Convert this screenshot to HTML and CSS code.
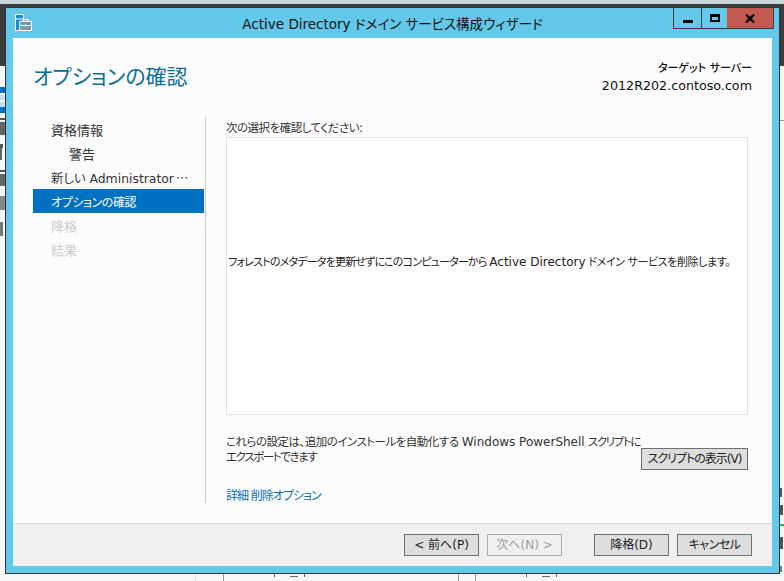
FILE: index.html
```html
<!DOCTYPE html>
<html lang="ja">
<head>
    <meta charset="UTF-8">
    <title>Active Directory ドメイン サービス構成ウィザード</title>
    <link rel="stylesheet" href="styles.css">
</head>
<body>
    <!-- Server Manager showing behind the dialog -->
    <svg class="desktop" width="784" height="581" viewBox="0 0 784 581">
        <rect width="784" height="581" fill="#f7f7f7"/>
        <rect width="784" height="4" fill="#c9d6da"/>
        <rect y="4" width="784" height="62" fill="#3d3d3d"/>
        <rect y="87" width="5" height="6" fill="#0070c0"/>
        <rect y="95" width="5" height="5" fill="#c4def2"/>
        <rect y="102" width="5" height="5" fill="#c4def2"/>
        <rect y="107" width="5" height="6" fill="#0070c0"/>
        <rect y="118" width="5" height="2" fill="#555"/>
        <rect y="122" width="5" height="13" fill="#666"/>
        <rect y="144" width="3" height="4" fill="#555"/>
        <rect y="148" width="2" height="12" fill="#666"/>
        <rect y="170" width="5" height="2" fill="#555"/>
        <rect y="174" width="5" height="12" fill="#666"/>
        <rect y="196" width="5" height="14" fill="#888"/>
        <rect y="222" width="3" height="14" fill="#777"/>
        <rect x="780" y="120" width="4" height="1" fill="#999"/>
        <rect x="780" y="488" width="2" height="9" fill="#555"/>
        <rect x="780" y="505" width="3" height="10" fill="#555"/>
        <rect x="780" y="524" width="4" height="2" fill="#2fb52f"/>
        <rect x="780" y="537" width="3" height="12" fill="#555"/>
        <rect x="780" y="566" width="2" height="6" fill="#777"/>
        <rect x="195" y="574" width="1" height="7" fill="#ddd"/>
        <rect x="223" y="574" width="1" height="7" fill="#999"/>
        <rect x="458" y="574" width="1" height="7" fill="#999"/>
        <rect x="475" y="574" width="1" height="7" fill="#999"/>
        <rect x="274" y="574" width="1" height="3" fill="#666"/>
        <rect x="290" y="576" width="8" height="1" fill="#666"/>
        <rect x="304" y="574" width="1" height="3" fill="#666"/>
        <rect x="526" y="574" width="1" height="3" fill="#666"/>
        <rect x="542" y="576" width="8" height="1" fill="#666"/>
        <rect x="556" y="574" width="1" height="3" fill="#666"/>
    </svg>

    <div class="window">
        <div class="titlebar">
            <svg class="app-icon" width="17" height="17" viewBox="0 0 17 17">
                <path d="M.5.500h8v16h-8z" fill="#1e8ad6" stroke="#fff"/>
                <path d="M1 5h7" stroke="#fff"/>
                <path d="M4.500 7.500h12v9h-12z" fill="#7b98ae" stroke="#fff"/>
                <path d="M8 7V5.500h5V7M5 11.500h11M10.500 10.500v2" fill="none" stroke="#fff"/>
            </svg>
            <div class="title">Active Directory ドメイン サービス構成ウィザード</div>
            <div class="win-buttons">
                <div class="win-btn btn-min"><span class="min-glyph"></span></div>
                <div class="win-btn btn-max"><span class="max-glyph"></span></div>
                <div class="win-btn btn-close">
                    <svg width="10" height="9" viewBox="0 0 10 9"><path d="M1 .500l8 8M9 .500l-8 8" stroke="#000" stroke-width="2.400"/></svg>
                </div>
            </div>
        </div>

        <div class="client">
            <div class="header">
                <h1>オプションの確認</h1>
                <div class="target">
                    <div class="target-label">ターゲット サーバー</div>
                    <div class="target-name">2012R202.contoso.com</div>
                </div>
            </div>

            <div class="main">
                <div class="steps">
                    <div class="step">資格情報</div>
                    <div class="step sub">警告</div>
                    <div class="step long">新しい Administrator<span class="ellipsis">…</span></div>
                    <div class="step active">オプションの確認</div>
                    <div class="step off">降格</div>
                    <div class="step off">結果</div>
                </div>

                <div class="content">
                    <div class="label">次の選択を確認してください:</div>
                    <div class="review"><span>フォレストのメタデータを更新せずにこのコンピューターから <span class="latin">Active Directory</span> <span class="review-tail">ドメイン サービスを削除します。</span></span></div>
                    <div class="export">
                        <div class="export-text">これらの設定は、追加のインストールを自動化する <span class="latin">Windows PowerShell</span> <span class="kana">スクリプトに</span><br><span class="kana">エクスポートできます</span></div>
                        <button class="btn btn-script">スクリプトの表示(V)</button>
                    </div>
                    <a class="more" href="#">詳細 削除オプション</a>
                </div>
            </div>

            <div class="footer">
                <button class="btn">&lt; 前へ(P)</button>
                <button class="btn disabled">次へ(N) &gt;</button>
                <button class="btn gap">降格(D)</button>
                <button class="btn btn-cancel">キャンセル</button>
            </div>
        </div>
    </div>
</body>
</html>
```

FILE: styles.css
```css
html, body {
    margin: 0;
    height: 100%;
}

body {
    overflow: hidden;
    font-family: "DejaVu Sans", "Noto Sans CJK JP", sans-serif;
    font-feature-settings: "palt";
    font-size: 12px;
    color: #222;
}

.desktop {
    position: absolute;
    left: 0;
    top: 0;
}

.window {
    position: absolute;
    left: 5px;
    top: 7px;
    width: 775px;
    height: 567px;
    box-sizing: border-box;
    border: 1px solid #333;
    background-color: #63c8ea;
    padding: 0 7px 7px 7px;
    display: flex;
    flex-direction: column;
}

.titlebar {
    height: 30px;
    flex-shrink: 0;
    position: relative;
    display: flex;
    align-items: center;
    justify-content: center;
}

.app-icon {
    position: absolute;
    left: 2px;
    top: 6px;
}

.title {
    font-size: 13.500px;
    color: #111;
    margin-bottom: 1px;
}

.win-buttons {
    position: absolute;
    right: -2px;
    top: 0;
    display: flex;
    height: 21px;
    box-sizing: border-box;
    border: 1px solid #3d3d3d;
    border-top: 0;
}

.win-btn {
    display: flex;
    align-items: center;
    justify-content: center;
    box-sizing: border-box;
}

.btn-min {
    width: 28px;
    border-right: 1px solid #3d3d3d;
}

.btn-max {
    width: 25px;
}

.btn-close {
    width: 46px;
    background-color: #c35a50;
}

.min-glyph {
    width: 10px;
    height: 3px;
    margin-top: 7px;
    background-color: #000;
}

.max-glyph {
    width: 6px;
    height: 3px;
    border: 2px solid #000;
    border-top-width: 3px;
}

.client {
    flex: 1;
    display: flex;
    flex-direction: column;
    background-color: #fcfcfc;
    min-height: 0;
}

.header {
    height: 79px;
    flex-shrink: 0;
    display: flex;
    justify-content: space-between;
    padding: 0 20px 0 20px;
    box-sizing: border-box;
}

h1 {
    margin: 24px 0 0 0;
    font-size: 21px;
    font-weight: normal;
    line-height: 30px;
    color: #0a6f96;
}

.target {
    margin-top: 22px;
    text-align: right;
    line-height: 17px;
    color: #111;
}

.target-label {
    font-size: 11px;
    font-weight: 500;
}

.target-name {
    font-size: 12.700px;
}

.main {
    flex: 1;
    display: flex;
    min-height: 0;
}

.steps {
    width: 171px;
    margin-left: 20px;
    flex-shrink: 0;
}

.step {
    height: 24px;
    line-height: 28px;
    padding-left: 18px;
    font-size: 13px;
    white-space: nowrap;
    overflow: hidden;
    color: #333;
}

.step.sub {
    padding-left: 36px;
}

.step.long {
    font-size: 12.400px;
    line-height: 27px;
}

.ellipsis {
    font-family: "Noto Sans CJK JP", sans-serif;
    font-feature-settings: normal;
    margin-left: 2px;
}

.step.active {
    background-color: #0070c0;
    font-size: 12px;
    letter-spacing: -0.400px;
    color: #fff;
}

.step.off {
    color: #ccc;
}

.content {
    flex: 1;
    margin: 0 24px 20px 1px;
    border-left: 1px solid #ccc;
    padding-left: 20px;
    display: flex;
    flex-direction: column;
    min-width: 0;
}

.label {
    height: 20px;
    line-height: 22px;
    font-size: 11.500px;
    letter-spacing: -0.500px;
    color: #333;
}

.review {
    height: 278px;
    flex-shrink: 0;
    box-sizing: border-box;
    border: 1px solid #e3e3e3;
    background-color: #fff;
    display: flex;
    align-items: center;
    padding: 0 0 30px 1px;
    font-size: 11px;
    letter-spacing: -0.800px;
    white-space: nowrap;
}

.review-tail {
    letter-spacing: -0.400px;
}

.latin {
    font-size: 12px;
    letter-spacing: 0;
}

.export {
    position: relative;
    margin-top: 20px;
}

.export-text {
    line-height: 15px;
    font-size: 11.500px;
    letter-spacing: -0.500px;
    white-space: nowrap;
    color: #333;
}

.kana {
    letter-spacing: -1.400px;
}

.btn {
    height: 22px;
    width: 75px;
    padding: 0;
    box-sizing: border-box;
    border: 1px solid #707070;
    background-color: #dedede;
    font-family: inherit;
    font-feature-settings: inherit;
    font-size: 12px;
    line-height: 18px;
    white-space: nowrap;
    color: #222;
}

.btn-script {
    position: absolute;
    right: 0;
    top: 13px;
    width: 107px;
    letter-spacing: -1px;
}

.btn-cancel {
    letter-spacing: -0.500px;
}

.btn.disabled {
    border-color: #adadad;
    background-color: #f0f0f0;
    color: #a0a0a0;
}

.more {
    margin-top: auto;
    line-height: 14px;
    letter-spacing: -1px;
    color: #0a6fb8;
    text-decoration: none;
}

.footer {
    height: 43px;
    flex-shrink: 0;
    box-sizing: border-box;
    border-top: 1px solid #d9d9d9;
    background-color: #f0f0f0;
    display: flex;
    justify-content: flex-end;
    gap: 8px;
    padding: 10px 20px 0 0;
}

.btn.gap {
    margin-left: 24px;
}
```
